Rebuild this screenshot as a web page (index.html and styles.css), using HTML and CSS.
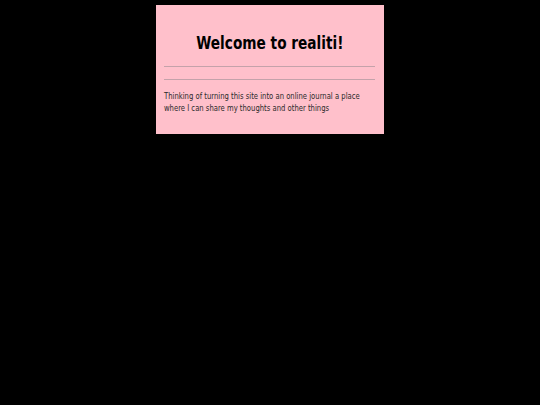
FILE: index.html
```html
<!DOCTYPE html>
<html>
<head>
<meta charset="utf-8">
<link rel="stylesheet" href="styles.css">
</head>
<body>
<div class="box">
  <h1 class="title"><span class="narrow">Welcome to realiti!</span></h1>
  <hr class="rule">
  <hr class="rule">
  <p class="text">Thinking of turning this site into an online journal a place where I can share my thoughts and other things</p>
</div>
</body>
</html>
```
FILE: styles.css
```css
html, body { margin: 0; padding: 0; background: #000; }
body { font-family: "DejaVu Sans", "Liberation Sans", sans-serif; }
.box {
  width: 228px;
  height: 129px;
  box-sizing: border-box;
  margin: 5px 0 0 156px;
  background: #ffc0cb;
  padding: 26px 9px 0 8px;
  overflow: hidden;
}
.title {
  margin: 0;
  text-align: center;
  font-size: 18px;
  font-weight: bold;
  line-height: 24px;
  color: #000;
  white-space: nowrap;
}
.narrow {
  display: inline-block;
  transform: scaleX(0.76);
  transform-origin: center;
}
.rule {
  border: 0;
  border-top: 1px solid #c4a2aa;
  margin: 0;
  height: 0;
}
.rule:first-of-type { margin-top: 11px; }
.rule + .rule { margin-top: 12px; }
.text {
  margin: 10px 0 0 0;
  width: 286px;
  font-size: 9.5px;
  line-height: 12px;
  color: #2a2a2a;
  transform: scaleX(0.72);
  transform-origin: left top;
}
```
